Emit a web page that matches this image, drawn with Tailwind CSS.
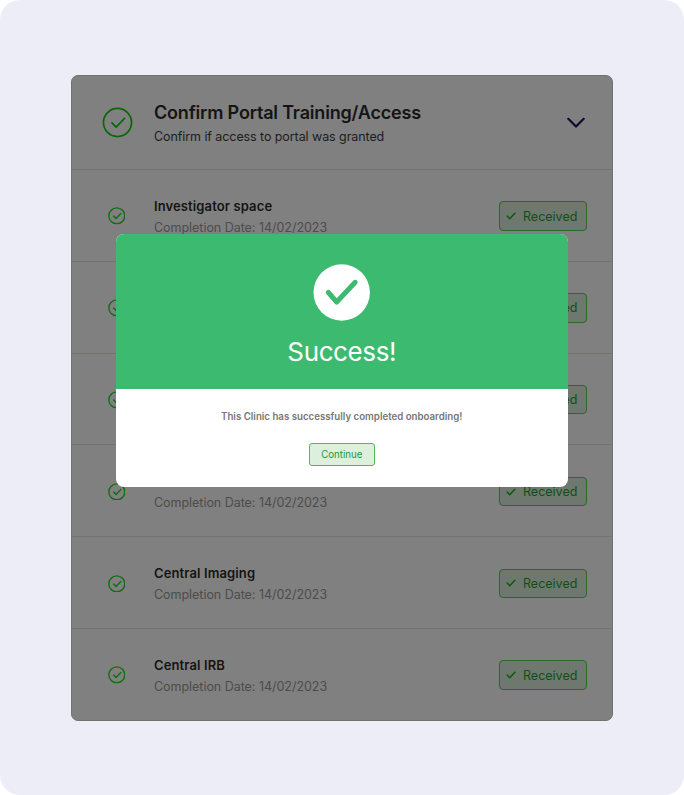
<!DOCTYPE html>
<html lang="en">
<head>
<meta charset="utf-8">
<title>Confirm Portal Training/Access</title>
<script src="https://cdn.jsdelivr.net/npm/@tailwindcss/browser@4"></script>
</head>
<body class="bg-white font-['Inter',sans-serif]">
<svg class="hidden">
  <symbol id="circle-check" viewBox="0 0 32 32"><circle cx="16" cy="16" r="14.5"/><path d="M10.3 16.3 14.6 20.8 23.3 11.7"/></symbol>
  <symbol id="tick" viewBox="0 0 10 8"><path d="M1.2 4.1 3.7 6.7 8.9 1.2"/></symbol>
</svg>
<main class="h-[795px] w-[684px] rounded-[20px] bg-[#ededf7] pl-[71px] pt-[75px]">
  <section class="relative h-[646px] w-[542px] overflow-hidden rounded-[7px] border border-[#72726d] bg-[#808080]">
    <header class="flex h-[94px] items-center border-b border-[#73736c] pl-[29.5px] pr-[27px]">
      <svg class="size-[31px] fill-none stroke-[#086808] stroke-[1.8]" stroke-linecap="round" stroke-linejoin="round"><use href="#circle-check"/></svg>
      <div class="ml-[21.5px] flex-1 pt-[5px]">
        <h1 class="text-[18px] leading-6 font-semibold tracking-[-0.19px] text-[#141414]">Confirm Portal Training/Access</h1>
        <p class="text-[12.5px] leading-6 tracking-[-0.08px] text-[#1c1c1c]">Confirm if access to portal was granted</p>
      </div>
      <svg class="h-[11px] w-[18px] fill-none stroke-[#0d0a2c] stroke-[2.2]" viewBox="0 0 18 11" stroke-linecap="round" stroke-linejoin="round"><path d="M1.3 1.8 9 9.5 16.7 1.8"/></svg>
    </header>
    <div id="rows"></div>

    <div role="dialog" class="absolute left-[44px] top-[158px] h-[252.5px] w-[451.5px] rounded-[8px] bg-white">
      <div class="flex h-[155px] flex-col items-center rounded-t-[8px] bg-[#3cba70] pt-[30px]">
        <svg class="size-[57px] fill-none" viewBox="0 0 57 57"><circle cx="28.7" cy="28.5" r="28.2" fill="#fff"/><path d="M15.3 28.3 23.7 38 42.2 18.3" stroke="#3cba70" stroke-width="5" stroke-linecap="round" stroke-linejoin="round"/></svg>
        <h2 class="mt-[13px] text-[26px] leading-9 tracking-[-0.38px] text-white">Success!</h2>
      </div>
      <div class="flex flex-col items-center pt-[20px]">
        <p class="text-[9.7px] leading-4 font-semibold text-[#777]">This Clinic has successfully completed onboarding!</p>
        <button class="mt-[17.5px] h-[23.5px] w-[66px] rounded-[3px] border border-[#54b954] bg-[#ddf0dd] pt-[1.5px] text-[9.7px] text-[#26992a]">Continue</button>
      </div>
    </div>
  </section>
</main>
<template id="row">
  <article class="flex h-[91.8px] items-center border-b border-[#73736c] pl-[35.7px] pr-[25.5px] pt-[1.5px] last:border-0 last:pt-[0.5px]">
    <svg class="size-[17.6px] fill-none stroke-[#116d11] stroke-[2.5]" stroke-linecap="round" stroke-linejoin="round"><use href="#circle-check"/></svg>
    <div class="ml-[28.7px] flex-1 pt-[2.6px]">
      <h3 class="h-[21px] text-[13px] leading-[21px] font-semibold tracking-[0.12px] text-[#141414]"></h3>
      <p class="text-[12.5px] leading-[22px] tracking-[-0.03px] text-[#4c4c4c]">Completion Date: 14/02/2023</p>
    </div>
    <div class="flex h-[29.5px] w-[88px] items-center rounded-[4px] border border-[#286a28] bg-[#6e786e] pl-[6.5px] text-[12.5px] text-[#134f13]">
      <svg class="mr-[7px] h-2 w-[10px] fill-none stroke-[#0c570c] stroke-[1.4]" stroke-linecap="round" stroke-linejoin="round"><use href="#tick"/></svg>
      <span class="pt-[1.8px]">Received</span>
    </div>
  </article>
</template>
<script>
  const rows = document.getElementById('rows');
  for (const title of ['Investigator space', '', '', '', 'Central Imaging', 'Central IRB']) {
    const row = document.getElementById('row').content.cloneNode(true);
    row.querySelector('h3').textContent = title;
    rows.append(row);
  }
</script>
</body>
</html>
